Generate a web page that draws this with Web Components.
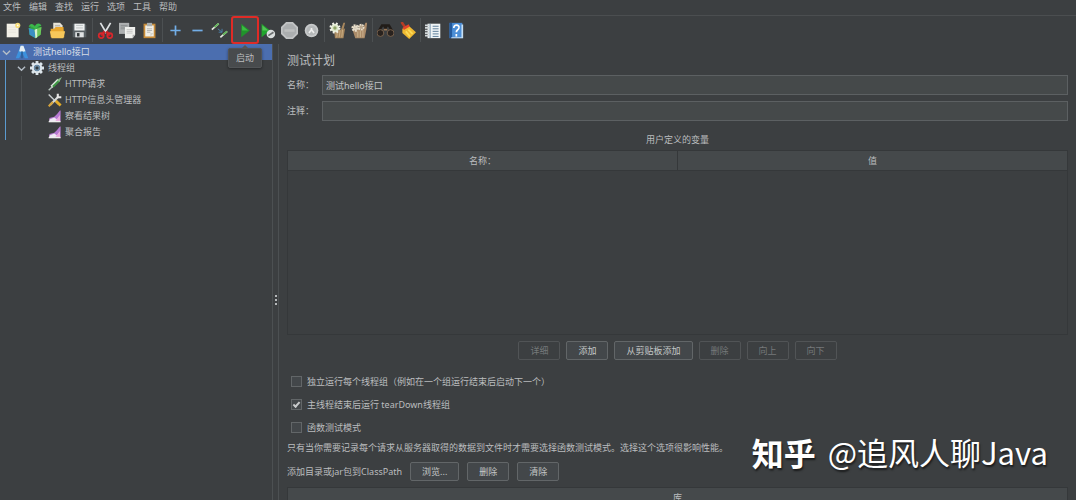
<!DOCTYPE html>
<html lang="zh-CN">
<head>
<meta charset="utf-8">
<title>测试计划</title>
<style>
html, body { height: 100%; margin: 0; }
body { background: #3c3f41; color: #bbbdbf; font: 9px/16px "Noto Sans", "Noto Sans CJK SC", sans-serif; overflow: hidden; }
</style>
</head>
<body>
<plan-app></plan-app>
<script>
const define = (name, html, setup) => customElements.define(name, class extends HTMLElement {
  constructor() {
    super();
    this.attachShadow({ mode: 'open' }).innerHTML = html;
  }
  connectedCallback() { if (setup) setup(this, this.shadowRoot); }
});

const icons = {
  file: '<path d="M2 2h14v16H2z" fill="#f3f1e8"/><path d="M4 6h9M4 9h9M4 12h9" stroke="#e6e4dc"/><circle cx="15" cy="4" r="3" fill="#f5dc7b"/><circle cx="15" cy="4" r="1" fill="#fff"/>',
  templates: '<path d="M2 7l7-3 8 2-1 9-6 4-7-4z" fill="#2fa540"/><path d="M2 7l7 2 1 10-7-4z" fill="#3b8fc4"/><path d="M9 9l8-3-1 9-6 4z" fill="#6fc85b"/><path d="M2 6c1-5 6-5 7 0 2-6 7-5 8-1-3-1-5 1-7 4-2-3-5-4-8-3z" fill="#3cb84b"/><path d="M9 9l3-1v10l-2 1z" fill="#d8f2d2"/>',
  open: '<path d="M5 1h8l3 3v7H5z" fill="#e8e4d6"/><path d="M7 4h6M7 6h7" stroke="#aaa"/><path d="M2 8h4l2-2h9l1 12H2z" fill="#e9a72e"/><path d="M1 11h18l-2 8H3z" fill="#f7c75a"/>',
  save: '<path d="M2 2h15l1 2v14H2z" fill="#596064"/><path d="M4 2h12v8H4z" fill="#eef0f0"/><path d="M6 4h8M6 7h8" stroke="#b5babb"/><path d="M5 12h10v6H5z" fill="#dfe2e3"/><path d="M7 13h3v4H7z" fill="#34393b"/>',
  cut: '<path d="M4 1l7 12M16 1L9 13" stroke="#dfe2e4" stroke-width="2"/><path d="M11 11l4 5M9 11l-4 5" stroke="#c52126" stroke-width="3"/><circle cx="5" cy="16" r="3" fill="none" stroke="#d9272c" stroke-width="2"/><circle cx="15" cy="16" r="3" fill="none" stroke="#d9272c" stroke-width="2"/>',
  copy: '<path d="M0 1h12v13H0z" fill="#adb0b1"/><path d="M2 4h8M2 6h8M2 8h8" stroke="#85898b"/><path d="M7 6h12v9l-3 4H7z" fill="#eff0ed"/><path d="M9 9h7M9 11h7M9 13h7" stroke="#bfc1bf"/><path d="M16 15h3l-3 4z" fill="#aaa"/>',
  paste: '<path d="M3 2h14v17H3z" fill="#c78b38"/><path d="M5 4h10v13H5z" fill="#f0eee5"/><path d="M7 1h6v4H7z" fill="#a8adae"/><path d="M7 8h6M7 10h6M7 12h4" stroke="#aaa"/><path d="M11 17v-4h4" fill="#d5d5ce"/>',
  plus: '<path d="M10 4v12M4 10h12" stroke="#72aee8" stroke-width="2"/>',
  minus: '<path d="M4 10h12" stroke="#72aee8" stroke-width="2"/>',
  toggle: '<path d="M1 9l8-7M11 18l8-7" stroke="#e3e6e0" stroke-width="2"/><path d="M4 6l5-4M14 15l5-4" stroke="#61b657" stroke-width="2"/><path d="M8 8l5 4m0-4v4H9" stroke="#4e88b5" fill="none"/>',
  play: '<path d="M5 2l10 8-10 8z" fill="#20942b"/><path d="M6 4l7 6H6z" fill="#3cbd43"/>',
  playOne: '<path d="M3 2l10 8-10 8z" fill="#20a52d"/><path d="M4 4l7 6H4z" fill="#54c456"/><circle cx="14" cy="14" r="5" fill="#d9dddd"/><path d="M11 16l6-4" stroke="#696d6e" stroke-width="2"/>',
  stop: '<path d="M6 0h8l6 6v8l-6 6H6l-6-6V6z" fill="#c1c3c4"/><path d="M7 2h6l5 5v6l-5 5H7l-5-5V7z" fill="#abaeaf"/><path d="M4 10h12" stroke="#bdbfbf" stroke-width="3"/>',
  shutdown: '<circle cx="10" cy="10" r="8" fill="#c7c9ca"/><circle cx="10" cy="10" r="6" fill="#b4b7b8"/><path d="M7 13l3-4 3 4M10 7v2" stroke="#eee" stroke-width="2" fill="none"/>',
  broom: '<path d="M6 10l8-1 3-8h2l-2 8 2-2-2 12H7z" fill="#a7875e"/><path d="M10 12l-1 6M13 10l-1 8M16 9l-1 9" stroke="#cfb489"/><circle cx="7" cy="7" r="5" fill="#dce7c9" stroke="#f2f2e7" stroke-width="3" stroke-dasharray="2 2"/><circle cx="7" cy="7" r="2" fill="#8fa467"/>',
  broomAll: '<path d="M2 10l12-2 3-7h2l-1 8-2 10H5z" fill="#ab8b69"/><path d="M8 11v7M11 10v8M14 8v10" stroke="#d0b994"/><circle cx="5" cy="7" r="3" fill="#d8cfbd" stroke="#e9dfcb" stroke-width="3" stroke-dasharray="2 1"/><circle cx="12" cy="6" r="3" fill="#b8a68d" stroke="#e8decb" stroke-width="2" stroke-dasharray="2 1"/>',
  find: '<path d="M2 11l4-7h3l1 4 1-4h3l4 7" stroke="#211c18" stroke-width="3" fill="none"/><circle cx="4" cy="13" r="4" fill="#29221e" stroke="#826952"/><circle cx="16" cy="13" r="4" fill="#29221e" stroke="#826952"/><path d="M8 9h4" stroke="#967554" stroke-width="2"/>',
  sweep: '<path d="M3 0l6 9" stroke="#b63c25" stroke-width="3"/><path d="M4 8l7-4 9 8-8 8-8-7z" fill="#efb931"/><path d="M5 8l7-4" stroke="#e1452c" stroke-width="3"/><path d="M8 11l5 6M11 9l5 5" stroke="#fadb59" stroke-width="2"/>',
  log: '<path d="M3 2h15v17H3z" fill="#eff4f6"/><path d="M9 5h7M9 8h7M9 11h7M9 14h7M9 17h7" stroke="#476d8c"/><path d="M6 2v17" stroke="#5d7e9a"/><path d="M0 4h5M0 7h5M0 10h5M0 13h5M0 16h5" stroke="#d1d7d9" stroke-width="2"/>',
  help: '<path d="M3 1h15v18H3z" fill="#4c8fd8"/><path d="M3 1h3v18H3z" fill="#245a9d"/><path d="M17 3h2v16H5v-1h12z" fill="#c7dff2"/><path d="M8 7c0-5 7-4 6 0-1 3-3 2-3 5M11 14v3" fill="none" stroke="#fff" stroke-width="2"/>',
  plan: '<path d="M8 1h4l7 18h-5l-4-9-4 9H1z" fill="#3c91dd"/><path d="M8 1h4l3 8-5 1-4-1z" fill="#e6eff5"/><path d="M10 9v10" stroke="#225f9a" stroke-width="2"/>',
  gear: '<circle cx="10" cy="10" r="6" fill="#577d9d" stroke="#e0e8ed" stroke-width="3"/><path d="M10 0v4M10 16v4M0 10h4M16 10h4M3 3l3 3M14 14l3 3M17 3l-3 3M3 17l3-3" stroke="#dce5ea" stroke-width="4"/><circle cx="10" cy="10" r="3" fill="#313a41" stroke="#8eacbf"/>',
  dropper: '<path d="M1 19l7-7" stroke="#b6c5bd" stroke-width="2"/><path d="M5 14L15 4" stroke="#e1e9e1" stroke-width="4"/><path d="M7 14l9-9" stroke="#3f9946" stroke-width="3"/><path d="M13 4l3 3 4-7z" fill="#86bb87"/>',
  tools: '<path d="M1 2l14 14" stroke="#cbd0d3" stroke-width="2"/><path d="M11 11l7 7" stroke="#e4ad28" stroke-width="4"/><path d="M3 17L15 5" stroke="#d6d9d9" stroke-width="3"/><path d="M1 19l6-6" stroke="#d5a33b" stroke-width="3"/><path d="M14 1v5h5" stroke="#e5e5e5" stroke-width="3" fill="none"/>',
  chart: '<path d="M2 18v-5l7-2 4-4 4-5h1v16z" fill="#b579d1"/><path d="M2 18v-3l7-3 4 3 4-6v9z" fill="#eee9f4"/><path d="M10 18l7-9v9z" fill="#eaa9df"/><path d="M1 18h17" stroke="#eee" stroke-width="2"/>',
  chevron: '<path d="M2 6l8 8 8-8" stroke="#b5bec7" stroke-width="3" fill="none"/>'
};

customElements.define('app-icon', class extends HTMLElement {
  static observedAttributes = ['name'];
  constructor() {
    super();
    this.attachShadow({ mode: 'open' }).innerHTML = '<style>:host{display:block;flex:none;width:20px;height:20px}svg{display:block;width:100%;height:100%}</style><svg viewBox="0 0 20 20" aria-hidden="true"></svg>';
  }
  attributeChangedCallback(attribute, before, name) {
    this.shadowRoot.querySelector('svg').innerHTML = icons[name] || '';
  }
});

define('menu-bar', `<style>
:host{display:block;height:15px;border-bottom:1px solid #4b4e50}
nav{display:flex;gap:8px;padding:0 3px}
button{all:unset;line-height:14px}
</style><nav><button>文件</button><button>编辑</button><button>查找</button><button>运行</button><button>选项</button><button>工具</button><button>帮助</button></nav>`);

define('tool-button', `<style>
:host{display:block;position:relative}
button{display:grid;place-items:center;box-sizing:border-box;width:22px;height:28px;padding:0;border:0;background:none}
:host([active]) button{width:28px;margin:0 -3px;border:2px solid #e02b26;border-radius:3px;background:#46494b}
app-icon{width:17px;height:17px}
[role=tooltip]{position:absolute;z-index:2;top:32px;left:-6px;width:32px;text-align:center;line-height:18px;background:#484b4d;border:1px solid #515456;border-radius:2px;box-shadow:0 1px 3px #0006}
[role=tooltip]::before{content:"";position:absolute;left:12px;top:-4px;border:solid transparent;border-width:0 4px 4px;border-bottom-color:#555}
</style><button><app-icon></app-icon></button>`, (host, root) => {
  const label = host.getAttribute('label');
  root.querySelector('button').setAttribute('aria-label', label);
  root.querySelector('app-icon').setAttribute('name', host.getAttribute('icon'));
  if (host.hasAttribute('active')) root.querySelector('button').insertAdjacentHTML('afterend', '<span role="tooltip">' + label + '</span>');
});

// A null entry separates two groups of tools.
const tools = [['file','新建'],['templates','模板'],['open','打开'],['save','保存'],null,['cut','剪切'],['copy','复制'],['paste','粘贴'],null,['plus','展开'],['minus','折叠'],['toggle','切换'],null,['play','启动'],['playOne','无间隔启动'],['stop','停止'],['shutdown','关闭'],null,['broom','清除'],['broomAll','清除全部'],null,['find','搜索'],['sweep','重置搜索'],null,['log','函数助手'],['help','帮助']];
define('tool-bar', `<style>
:host{display:block;height:28px}
div{display:flex;align-items:center;padding-left:2px}
i{width:1px;height:24px;margin:0 1px 0 2px;background:#4c5052}
</style><div role="toolbar">` + tools.map(t => t ? `<tool-button icon="${t[0]}" label="${t[1]}"${t[0] === 'play' ? ' active' : ''}></tool-button>` : '<i></i>').join('') + '</div>');

define('plan-tree', `<style>
:host{display:block}
.row{display:flex;align-items:center;height:16px;gap:4px}
.selected{background:#4b6eaf;color:#d6dce5;padding-left:2px}
.row app-icon{width:14px;height:14px}
.row .chevron{width:9px;height:9px}
.branch{margin-left:5px;border-left:1px solid #5b9bd0}
.branch>.row{padding-left:11px}
.leaves{margin-left:15px;border-left:1px solid #4c5052}
.leaves .row{padding-left:26px;gap:3px}
</style><div role="tree">
<div class="row selected" role="treeitem" aria-selected="true"><app-icon class="chevron" name="chevron"></app-icon><app-icon name="plan"></app-icon><span>测试hello接口</span></div>
<div class="branch" role="group"><div class="row" role="treeitem"><app-icon class="chevron" name="chevron"></app-icon><app-icon name="gear"></app-icon><span>线程组</span></div>
<div class="leaves" role="group">
<div class="row" role="treeitem"><app-icon name="dropper"></app-icon><span>HTTP请求</span></div>
<div class="row" role="treeitem"><app-icon name="tools"></app-icon><span>HTTP信息头管理器</span></div>
<div class="row" role="treeitem"><app-icon name="chart"></app-icon><span>察看结果树</span></div>
<div class="row" role="treeitem"><app-icon name="chart"></app-icon><span>聚合报告</span></div>
</div></div></div>`);

define('push-button', `<style>
:host{display:block}
button{display:block;height:19px;padding:0 11px;font:inherit;line-height:17px;color:#c5c7c8;background:#43474a;border:1px solid #626668;border-radius:2px}
button:disabled{color:#75787a;background:#3c3f41;border-color:#515456}
</style><button><slot></slot></button>`, (host, root) => { root.querySelector('button').disabled = host.hasAttribute('disabled'); });

define('check-option', `<style>
:host{display:block}
label{display:flex;align-items:center;gap:5px;height:23px}
input{appearance:none;display:grid;place-items:center;box-sizing:border-box;width:11px;height:11px;margin:0;background:#43474a;border:1px solid #626668}
input:checked::before{content:"";width:5px;height:2px;border:solid #c8cacb;border-width:0 0 2px 2px;transform:translateY(-1px) rotate(-48deg)}
</style><label><input type="checkbox"><slot></slot></label>`, (host, root) => { root.querySelector('input').checked = host.hasAttribute('checked'); });

define('text-row', `<style>
:host{display:block}
label{display:flex;align-items:center;gap:8px}
input{flex:1;min-width:0;box-sizing:border-box;height:20px;padding:0 3px;font:inherit;color:#c2c4c5;background:#45494a;border:1px solid #5c6062;outline:0}
</style><label><slot></slot><input></label>`, (host, root) => { root.querySelector('input').value = host.getAttribute('value') || ''; });

define('variables-table', `<style>
:host{display:block;height:185px;border:1px solid #35383a;box-sizing:border-box}
table{width:100%;table-layout:fixed;border-collapse:collapse}
th{height:19px;padding:0;font-weight:400;background:#45494b;border-bottom:1px solid #35383a}
th+th{border-left:1px solid #35383a}
</style><table><thead><tr><th scope="col">名称：</th><th scope="col">值</th></tr></thead></table>`);

define('library-table', `<style>
:host{display:block;border:1px solid #35383a}
table{width:100%;border-collapse:collapse}
th{height:19px;padding:0;font-weight:400;background:#45494b}
</style><table><thead><tr><th scope="col">库</th></tr></thead></table>`);

define('plan-editor', `<style>
:host{display:block;padding:7px 8px 0}
h1{margin:0;font-size:12px;line-height:20px;font-weight:400}
.fields{display:grid;gap:6px;margin-top:4px}
h2{margin:11px 0 2px;font-size:9px;line-height:16px;font-weight:400;text-align:center}
.actions{display:flex;justify-content:center;gap:6px;margin:6px 0 10px}
.checks{padding-left:4px}
p{margin:1px 0 0}
.classpath{display:flex;align-items:center;gap:8px;margin:6px 0}
</style>
<h1>测试计划</h1>
<div class="fields"><text-row value="测试hello接口">名称：</text-row><text-row>注释：</text-row></div>
<h2>用户定义的变量</h2>
<variables-table></variables-table>
<div class="actions"><push-button disabled>详细</push-button><push-button>添加</push-button><push-button>从剪贴板添加</push-button><push-button disabled>删除</push-button><push-button disabled>向上</push-button><push-button disabled>向下</push-button></div>
<div class="checks"><check-option>独立运行每个线程组（例如在一个组运行结束后启动下一个）</check-option><check-option checked>主线程结束后运行 tearDown线程组</check-option><check-option>函数测试模式</check-option></div>
<p>只有当你需要记录每个请求从服务器取得的数据到文件时才需要选择函数测试模式。选择这个选项很影响性能。</p>
<div class="classpath"><span>添加目录或jar包到ClassPath</span><push-button>浏览...</push-button><push-button>删除</push-button><push-button>清除</push-button></div>
<library-table></library-table>`);

define('water-mark', `<style>
:host{position:absolute;right:28px;bottom:26px;display:flex;align-items:center;gap:12px;line-height:44px;color:#fff;text-shadow:1px 2px 2px #0009;font-family:"Noto Sans CJK SC",sans-serif;pointer-events:none;white-space:nowrap}
b{font-size:32px;font-weight:700}
span{font-size:31px}
</style><b>知乎</b><span>@追风人聊Java</span>`);

define('plan-app', `<style>
:host{display:flex;flex-direction:column;height:100%;position:relative;overflow:hidden}
main{flex:1;min-height:0;display:grid;grid-template-columns:272px 7px 1fr}
.split{display:flex;flex-direction:column;justify-content:center;align-items:center;gap:2px;border-right:1px solid #4c5052;border-left:1px solid #4c5052;padding-top:56px;padding-bottom:8px;box-sizing:border-box}
.split i{width:2px;height:2px;background:#b5b8ba}
plan-editor{min-width:0}
</style><menu-bar></menu-bar><tool-bar></tool-bar>
<main><plan-tree></plan-tree><div class="split" role="separator"><i></i><i></i><i></i></div><plan-editor></plan-editor></main>
<water-mark></water-mark>`);
</script>
</body>
</html>
